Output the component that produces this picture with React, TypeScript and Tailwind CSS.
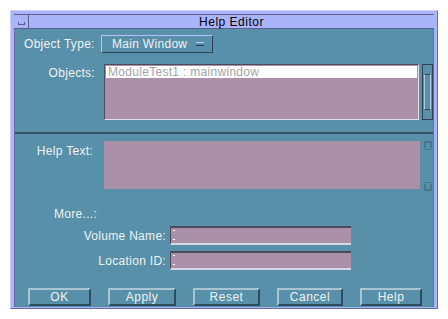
import React from "react";

const font = { fontFamily: '"Liberation Sans", Arial, sans-serif' };

const Button = ({ label, w }: { label: string; w: string }) => (
  <div
    className={`${w} h-[18px] flex items-center justify-center border-t-2 border-l-2 border-b-2 border-r-2 border-t-[#a9c4d2] border-l-[#a9c4d2] border-b-[#2d4e5e] border-r-[#2d4e5e] text-[12px] text-[#eef2f4] tracking-[0.5px]`}
  >
    {label}
  </div>
);

const Field = () => (
  <div className="relative w-[181px] h-[19px] bg-[#aa90a8] border-t-2 border-l border-b-2 border-t-[#4a4a5a] border-l-[#4a4a5a] border-b-[#d8d8e4]">
    <div className="absolute left-[2px] top-[2px] w-[2px] h-px bg-white" />
    <div className="absolute left-[2px] top-[11px] w-[2px] h-px bg-white" />
  </div>
);

export default function App() {
  return (
    <div className="w-[448px] h-[319px] bg-white pt-[10px] pl-[10px]" style={font}>
      <div className="w-[428px] h-[299px] bg-[#aab4f8] border-t border-l border-t-[#ccd2ff] border-l-[#ccd2ff] border-b border-r border-b-[#6a6c9c] border-r-[#6a6c9c] p-[3px]">
        {/* title bar */}
        <div className="flex h-[15px] border-t border-[#5c5e8c] border-b">
          <div className="w-[15px] h-full border-r border-[#5c5e8c] flex items-end justify-center pb-[3px]">
            <div className="w-[7px] h-[3px] border-b border-l border-r border-[#5c5e8c]" />
          </div>
          <div className="flex-1 flex items-center justify-center text-[12px] text-black tracking-[0.5px] leading-none">
            Help Editor
          </div>
        </div>
        {/* content */}
        <div className="h-[278px] bg-[#5790a8] border-l border-r border-[#6a6c9c] text-[#eef2f4] text-[12px] leading-none tracking-[0.3px]">
          <div className="flex items-center pt-[6px] pl-[9px]">
            <span className="w-[77px]">Object Type:</span>
            <div className="w-[112px] h-[18px] flex items-center justify-between pl-[10px] pr-[8px] border border-t-[#b8c0ff] border-l-[#b8c0ff] border-b-[#2d4050] border-r-[#2d4050]">
              <span>Main Window</span>
              <div className="w-[8px] h-[4px] border-t border-b border-t-[#c0c8ff] border-b-[#2d4050]" />
            </div>
          </div>
          <div className="flex mt-[11px]">
            <span className="w-[80px] text-right pt-[3px]">Objects:</span>
            <div className="ml-[9px] w-[315px] h-[56px] bg-[#aa90a8] border-t border-l border-t-[#4a4a5a] border-l-[#4a4a5a] border-b border-r border-b-[#e0e0ea] border-r-[#e0e0ea] p-[1px]">
              <div className="h-[12px] bg-white text-[#a4a4a4] pl-[2px] flex items-center">ModuleTest1 : mainwindow</div>
            </div>
            <div className="ml-[3px] w-[11px] h-[56px] flex flex-col border border-[#2d4050]">
              <div className="h-[9px] flex items-center justify-center text-[7px] text-[#c0d0e0]">·</div>
              <div className="flex-1 border-t border-b border-[#2d4050] bg-[#5790a8] mx-px border-x border-x-[#b0c8d8]" />
              <div className="h-[9px] flex items-center justify-center text-[7px] text-[#c0d0e0]">·</div>
            </div>
          </div>
          <div className="mt-[12px] h-[2px] bg-[#2f5264]" />
          <div className="flex mt-[7px]">
            <span className="w-[78px] text-right pt-[4px]">Help Text:</span>
            <div className="ml-[11px] w-[316px] h-[48px] bg-[#aa90a8]" />
            <div className="ml-[4px] w-[8px] h-[50px] flex flex-col justify-between">
              <div className="h-[9px] flex flex-col">
                <div className="h-[7px] border-t-2 border-l-2 border-r-2 border-[#48788e]" />
                <div className="mt-px h-px bg-[#48788e]" />
              </div>
              <div className="h-[9px] flex flex-col">
                <div className="h-px bg-[#48788e]" />
                <div className="mt-px h-[7px] border-b-2 border-l-2 border-r-2 border-[#48788e]" />
              </div>
            </div>
          </div>
          <div className="mt-[17px] pl-[39px]">More...:</div>
          <div className="flex items-center mt-[6px]">
            <span className="w-[151px] text-right">Volume Name:</span>
            <div className="ml-[4px]">
              <Field />
            </div>
          </div>
          <div className="flex items-center mt-[6px]">
            <span className="w-[151px] text-right">Location ID:</span>
            <div className="ml-[4px]">
              <Field />
            </div>
          </div>
          <div className="flex mt-[18px] pl-[13px] gap-[17px]">
            <Button label="OK" w="w-[63px]" />
            <Button label="Apply" w="w-[68px]" />
            <Button label="Reset" w="w-[67px]" />
            <Button label="Cancel" w="w-[66px]" />
            <Button label="Help" w="w-[62px]" />
          </div>
        </div>
      </div>
    </div>
  );
}
